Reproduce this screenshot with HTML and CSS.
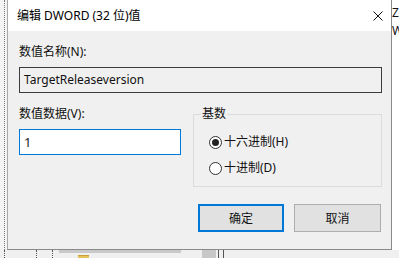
FILE: index.html
```html
<!DOCTYPE html>
<html lang="zh-CN">
<head>
<meta charset="utf-8">
<title>编辑 DWORD (32 位)值</title>
<link rel="stylesheet" href="styles.css">
</head>
<body>
<div class="screen">
  <div class="top">
    <div class="gutter"><div class="dots"></div></div>
    <div class="dialog">
      <div class="titlebar">
        <span class="title">编辑 DWORD (32 位)值</span>
        <svg class="close" width="10" height="10" viewBox="0 0 10 10"><path d="M0.5 0.5L9.5 9.5M9.5 0.5L0.5 9.5" stroke="#111" stroke-width="1" fill="none"/></svg>
      </div>
      <div class="body">
        <div class="label">数值名称(N):</div>
        <div class="namebox">TargetReleaseversion</div>
        <div class="row">
          <div class="col-left">
            <div class="label">数值数据(V):</div>
            <div class="valuebox">1</div>
          </div>
          <fieldset class="group">
            <legend>基数</legend>
            <div class="radio"><span class="dot checked"></span><span>十六进制(H)</span></div>
            <div class="radio second"><span class="dot"></span><span>十进制(D)</span></div>
          </fieldset>
        </div>
        <div class="buttons">
          <div class="btn primary">确定</div>
          <div class="btn">取消</div>
        </div>
      </div>
    </div>
    <div class="behind-right">
      <span>Z</span>
      <span>W</span>
    </div>
  </div>
  <div class="bottom">
    <div class="bdots first"></div>
    <div class="bdots"></div>
    <div class="bdots"></div>
    <div class="shade"><div class="folder"></div></div>
    <div class="block"></div>
    <div class="vline"></div>
    <div class="vline"></div>
  </div>
</div>
</body>
</html>
```

FILE: styles.css
```css
* { box-sizing: border-box; }
html, body { margin: 0; padding: 0; }
body {
  background: #f0f0f0;
  font-family: "Noto Sans", "Noto Sans CJK SC", sans-serif;
  font-size: 12px;
  color: #111;
}
.screen {
  width: 399px;
  height: 258px;
  overflow: hidden;
  display: flex;
  flex-direction: column;
  background: #f2f2f2;
}
.top {
  display: flex;
  height: 250px;
}
.gutter {
  width: 7px;
  background: #f4f4f4;
}
.dots {
  width: 5px;
  height: 100%;
  border-right: 1px dotted #7a7a7a;
}
.dialog {
  width: 385px;
  height: 250px;
  border-left: 1px solid #a8a8a8;
  border-right: 1px solid #8a8a8a;
  border-bottom: 1px solid #8a8a8a;
  background: #f0f0f0;
  display: flex;
  flex-direction: column;
}
.titlebar {
  height: 31px;
  background: #ffffff;
  display: flex;
  align-items: center;
  justify-content: space-between;
  padding: 0 8px 0 9px;
}
.title {
  line-height: 31px;
  color: #000;
}
.close { display: block; }
.body {
  padding: 13px 9px 0 11px;
  display: flex;
  flex-direction: column;
}
.label {
  line-height: 16px;
  height: 16px;
}
.namebox {
  margin-top: 7px;
  height: 26px;
  border: 1px solid #3c3c3c;
  background: #f0f0f0;
  line-height: 24px;
  padding-left: 4px;
  color: #111;
}
.row {
  margin-top: 13px;
  display: flex;
  gap: 12px;
}
.col-left {
  width: 162px;
  display: flex;
  flex-direction: column;
}
.valuebox {
  margin-top: 7px;
  height: 26px;
  border: 1px solid #0078d7;
  background: #ffffff;
  line-height: 24px;
  padding-left: 4px;
  font-size: 13px;
  color: #222;
}
.group {
  width: 189px;
  margin: 0;
  padding: 12px 8px 10px 15px;
  border: 1px solid #dcdcdc;
  min-width: 0;
}
.group legend {
  padding: 0 1px;
  margin-left: -8px;
  line-height: 16px;
  height: 16px;
}
.radio {
  display: flex;
  align-items: center;
  height: 16px;
  line-height: 16px;
}
.radio.second { margin-top: 10px; }
.dot {
  width: 13px;
  height: 13px;
  border: 1px solid #333;
  border-radius: 50%;
  background: #fff;
  margin-right: 2px;
  display: flex;
  align-items: center;
  justify-content: center;
  flex: none;
}
.dot.checked::after {
  content: "";
  width: 7px;
  height: 7px;
  border-radius: 50%;
  background: #222;
}
.buttons {
  margin-top: 17px;
  margin-right: 1px;
  display: flex;
  justify-content: flex-end;
  gap: 10px;
}
.btn {
  width: 87px;
  height: 28px;
  background: #e1e1e1;
  border: 1px solid #adadad;
  display: flex;
  align-items: center;
  justify-content: center;
  color: #111;
}
.btn.primary {
  width: 86px;
  border: 2px solid #0078d7;
}
.behind-right {
  width: 7px;
  background: #ffffff;
  display: flex;
  flex-direction: column;
  padding-top: 4px;
  overflow: hidden;
  font-size: 12px;
  line-height: 18px;
  color: #111;
}
.bottom {
  height: 8px;
  display: flex;
  background: #f0f0f0;
}
.bdots {
  width: 1px;
  height: 8px;
  border-left: 1px dotted #555;
  margin-left: 31px;
}
.bdots.first { margin-left: 4px; }
.bdots + .bdots + .bdots { margin-left: 15px; }
.shade {
  width: 122px;
  height: 3px;
  margin-left: 6px;
  background: #c9c9c9;
  position: relative;
}
.folder {
  position: absolute;
  left: 19px;
  top: 5px;
  width: 11px;
  height: 4px;
  background: #e6c35a;
  border-top: 1px solid #c8a23a;
}
.block {
  width: 14px;
  height: 8px;
  margin-left: 21px;
  background: #c8c8c8;
}
.vline {
  width: 1px;
  height: 8px;
  margin-left: 2px;
  background: #555;
}
.vline + .vline { margin-left: 4px; }
```
